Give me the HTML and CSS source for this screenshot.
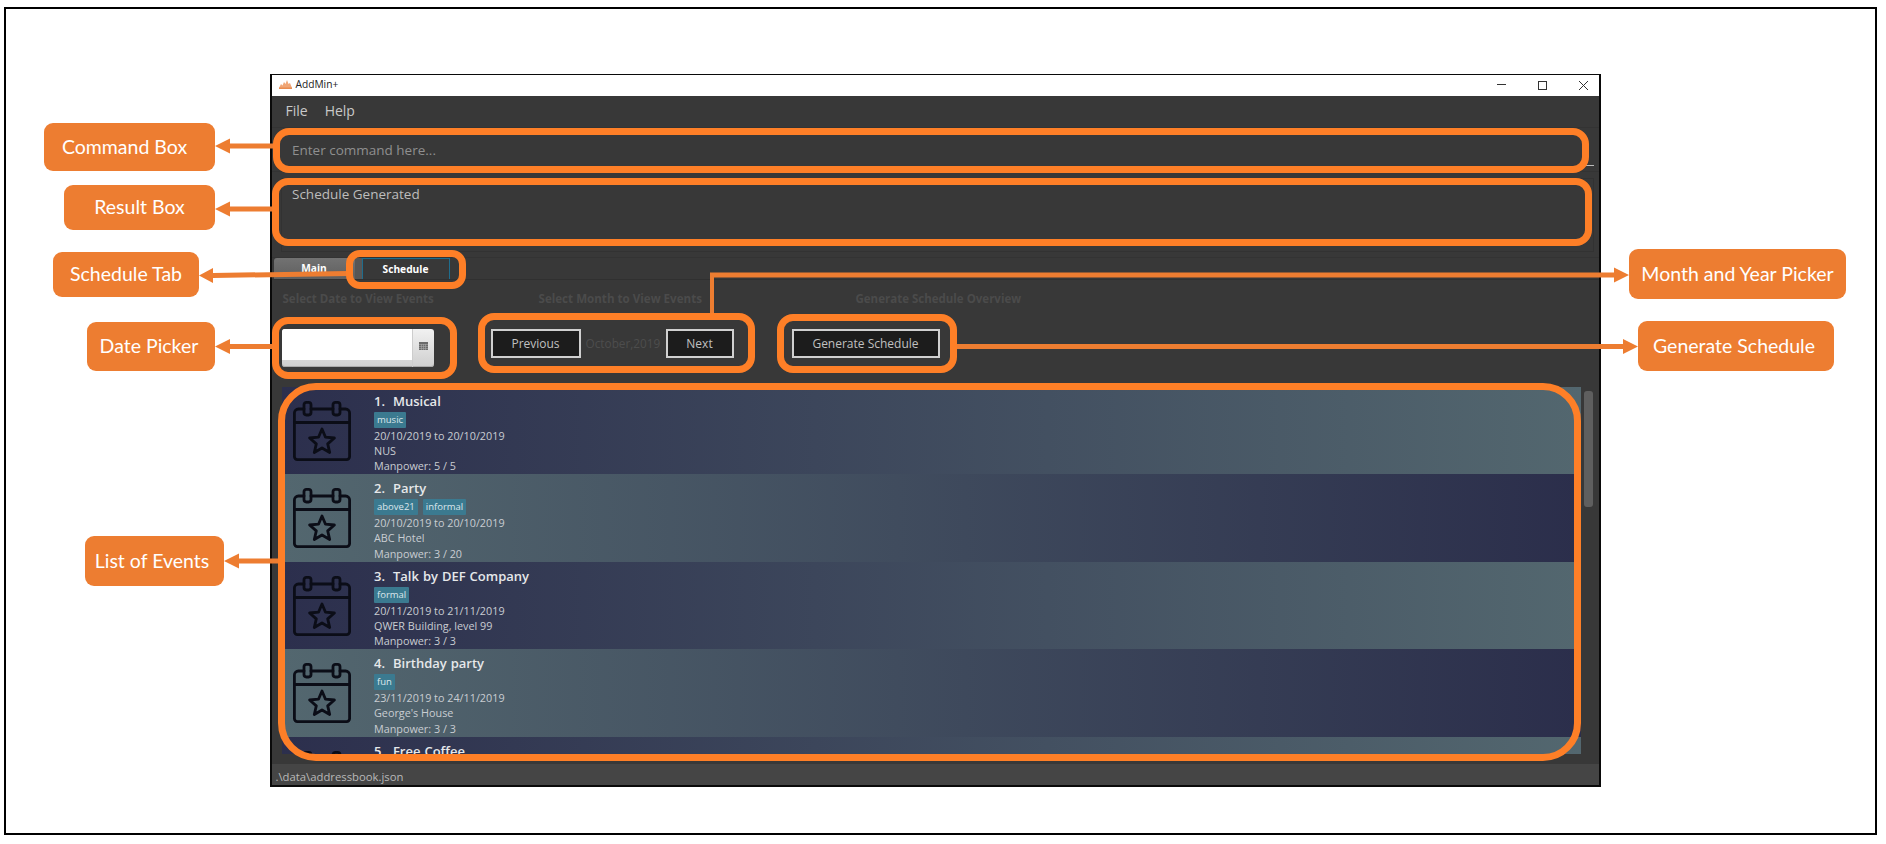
FILE: index.html
```html
<!DOCTYPE html>
<html lang="en">
<head>
<meta charset="utf-8">
<title>AddMin+ annotated</title>
<link rel="stylesheet" href="styles.css">
</head>
<body>
<svg class="defs" width="0" height="0" aria-hidden="true">
  <symbol id="cal" viewBox="0 0 58 60">
    <g fill="none" stroke="currentColor" stroke-width="2.8" stroke-linejoin="round" stroke-linecap="round">
      <path d="M11 8H5.4a4 4 0 0 0-4 4v43.6a3 3 0 0 0 3 3h49.2a3 3 0 0 0 3-3V12a4 4 0 0 0-4-4H47M18 8h22"/>
      <path d="M1.4 21.5h55.2"/>
      <rect x="11" y="1.4" width="7" height="12.6" rx="2.4"/>
      <rect x="40" y="1.4" width="7" height="12.6" rx="2.4"/>
      <path d="M29 28l3.5 8.2 8.9.8-6.7 5.9 2 8.6-7.7-4.5-7.7 4.5 2-8.6-6.7-5.9 8.9-.8z"/>
    </g>
  </symbol>
</svg>

<main class="slide">
  <section class="window">
    <header class="titlebar">
      <svg class="logo" viewBox="0 0 13 10" width="13" height="10"><path d="M0 9l2-4 1.500 1.500L5 3l1.500 2L8 1l1.500 4L11 4l2 5z" fill="#f0a676"/><path d="M0 8.500h13V10H0z" fill="#e98b4f"/></svg>
      <span class="app-name">AddMin+</span>
      <div class="win-controls">
        <svg class="wc wc-min" viewBox="0 0 9 9" width="9" height="9"><path d="M0 3.500h9" stroke="#333" fill="none"/></svg>
        <svg class="wc wc-max" viewBox="0 0 9 9" width="9" height="9"><rect x=".5" y=".5" width="8" height="8" fill="none" stroke="#333"/></svg>
        <svg class="wc wc-close" viewBox="0 0 9 9" width="9" height="9"><path d="M0 0l9 9M9 0l-9 9" stroke="#333" fill="none"/></svg>
      </div>
    </header>

    <nav class="menubar">
      <span class="menu-item">File</span>
      <span class="menu-item">Help</span>
    </nav>

    <div class="command">
      <span class="command-text">Enter command here...</span>
      <span class="command-mark"></span>
    </div>

    <div class="result">
      <div class="result-box">Schedule Generated</div>
    </div>

    <div class="tabs">
      <div class="tab tab-main">Main</div>
      <div class="tab-gap"></div>
      <div class="tab tab-schedule">Schedule</div>
    </div>

    <div class="panel">
      <div class="toolbar">
        <div class="group group-date">
          <div class="group-label">Select Date to View Events</div>
          <div class="datepicker">
            <div class="date-input"></div>
            <div class="date-button">
              <svg viewBox="0 0 9 8" width="9" height="8"><rect width="9" height="8" fill="#6a6a6a"/><path d="M0 2.500h9M0 4.500h9M0 6.500h9M2.500 2v6M4.500 2v6M6.500 2v6" stroke="#a8a8a8" stroke-width=".6"/></svg>
            </div>
          </div>
        </div>
        <div class="group group-month">
          <div class="group-label label-month">Select Month to View Events</div>
          <div class="month-row">
            <button class="btn btn-prev" type="button">Previous</button>
            <span class="month-name">October,2019</span>
            <button class="btn btn-next" type="button">Next</button>
          </div>
        </div>
        <div class="group group-gen">
          <div class="group-label label-gen">Generate Schedule Overview</div>
          <button class="btn btn-gen" type="button">Generate Schedule</button>
        </div>
      </div>

      <div class="list-wrap">
        <div class="list">
          <article class="row row-odd">
            <svg class="row-icon"><use href="#cal"/></svg>
            <div class="row-body">
              <div class="row-title">1.&nbsp; Musical</div>
              <div class="tags"><span class="tag">music</span></div>
              <div class="row-line">20/10/2019 to 20/10/2019</div>
              <div class="row-line">NUS</div>
              <div class="row-line">Manpower: 5 / 5</div>
            </div>
          </article>
          <article class="row row-even">
            <svg class="row-icon"><use href="#cal"/></svg>
            <div class="row-body">
              <div class="row-title">2.&nbsp; Party</div>
              <div class="tags"><span class="tag">above21</span><span class="tag">informal</span></div>
              <div class="row-line">20/10/2019 to 20/10/2019</div>
              <div class="row-line">ABC Hotel</div>
              <div class="row-line">Manpower: 3 / 20</div>
            </div>
          </article>
          <article class="row row-odd">
            <svg class="row-icon"><use href="#cal"/></svg>
            <div class="row-body">
              <div class="row-title">3.&nbsp; Talk by DEF Company</div>
              <div class="tags"><span class="tag">formal</span></div>
              <div class="row-line">20/11/2019 to 21/11/2019</div>
              <div class="row-line">QWER Building, level 99</div>
              <div class="row-line">Manpower: 3 / 3</div>
            </div>
          </article>
          <article class="row row-even">
            <svg class="row-icon"><use href="#cal"/></svg>
            <div class="row-body">
              <div class="row-title">4.&nbsp; Birthday party</div>
              <div class="tags"><span class="tag">fun</span></div>
              <div class="row-line">23/11/2019 to 24/11/2019</div>
              <div class="row-line">George's House</div>
              <div class="row-line">Manpower: 3 / 3</div>
            </div>
          </article>
          <article class="row row-odd">
            <svg class="row-icon"><use href="#cal"/></svg>
            <div class="row-body">
              <div class="row-title">5.&nbsp; Free Coffee</div>
            </div>
          </article>
        </div>
        <div class="scrollbar"><div class="scroll-thumb"></div></div>
      </div>
    </div>

    <footer class="status">.\data\addressbook.json</footer>
  </section>
</main>

<svg class="connectors" viewBox="0 0 1886 844" width="1886" height="844" aria-hidden="true">
  <path class="arrow" d="M215 146l15-7.500v5h44v5h-44v5z"/>
  <path class="arrow" d="M215 209l15-7.500v5h44v5h-44v5z"/>
  <path class="arrow" d="M199 275.500l14-7.500v5l135-2v5l-135 2v5z"/>
  <path class="arrow" d="M215 346.500l15-7.500v5h44v5h-44v5z"/>
  <path class="arrow" d="M224 561l15-7.500v5h41v5h-41v5z"/>
  <path class="arrow" d="M710 314v-41.500h904v-5l15 7.500-15 7.500v-5H714V314z"/>
  <path class="arrow" d="M955 344h668v-5l15 7.500-15 7.500v-5H955z"/>
</svg>

<div class="ring ring-command"></div>
<div class="ring ring-result"></div>
<div class="ring ring-tab"></div>
<div class="ring ring-date"></div>
<div class="ring ring-month"></div>
<div class="ring ring-gen"></div>
<div class="ring ring-list"></div>

<div class="callout call-command">Command Box</div>
<div class="callout call-result">Result Box</div>
<div class="callout call-tab">Schedule Tab</div>
<div class="callout call-date">Date Picker</div>
<div class="callout call-list">List of Events</div>
<div class="callout call-month">Month and Year Picker</div>
<div class="callout call-gen">Generate Schedule</div>
</body>
</html>
```
FILE: styles.css
```css
* { box-sizing: border-box; }
html, body { margin: 0; padding: 0; }
body {
  position: relative;
  width: 1886px;
  height: 844px;
  overflow: hidden;
  background: #fff;
  font-family: "Open Sans", "Noto Sans", sans-serif;
  padding: 7px 0 0 4px;
}
.defs { position: absolute; }

.slide {
  width: 1873px;
  height: 828px;
  border: 2.5px solid #000;
  padding: 64.5px 0 0 263.5px;
}

.window {
  width: 1331px;
  height: 713px;
  border: 2px solid #0a0a0a;
  border-top-width: 1px;
  background: #383838;
  display: flex;
  flex-direction: column;
}

/* title bar */
.titlebar {
  flex: 0 0 21px;
  background: #fff;
  display: flex;
  align-items: center;
  padding-left: 7px;
}
.logo { margin-top: -3px; }
.app-name { margin-left: 4px; margin-top: -2px; font-size: 10.200px; color: #222; }
.win-controls { margin-left: auto; display: flex; align-items: center; padding-right: 11px; }
.wc-max { margin-left: 32px; }
.wc-close { margin-left: 32px; }

/* menu */
.menubar {
  flex: 0 0 31px;
  display: flex;
  align-items: center;
  padding: 0 0 1px 14px;
  gap: 17px;
  font-size: 14px;
  color: #c9c9c9;
}

/* command */
.command {
  flex: 0 0 45px;
  position: relative;
  display: flex;
  align-items: center;
  padding: 1px 0 0 20.500px;
  border-top: 1px solid #333;
  border-bottom: 1px solid #333;
  font-size: 13.500px;
  color: #8f8f8f;
}
.command-mark {
  position: absolute;
  right: 5px;
  bottom: 5px;
  width: 9px;
  height: 1px;
  background: #bdbdbd;
}

/* result */
.result {
  flex: 0 0 86px;
  padding: 6px 5px 5px 9px;
  border-bottom: 1px solid #333;
}
.result-box {
  height: 100%;
  border: 1px solid #323232;
  padding: 5px 10.500px;
  font-size: 13.500px;
  line-height: 20px;
  color: #bdbdbd;
}

/* tabs */
.tabs {
  flex: 0 0 22px;
  display: flex;
  align-items: stretch;
  padding-left: 2px;
  border-bottom: 1px solid #303030;
}
.tab {
  display: flex;
  align-items: center;
  justify-content: center;
  font-size: 10.200px;
  font-weight: 700;
  color: #fff;
}
.tab-main {
  width: 81px;
  background: linear-gradient(#727272, #5f5f5f);
  border-radius: 3px 3px 0 0;
}
.tab-gap { width: 7px; background: #565656; }
.tab-schedule {
  width: 88px;
  background: #383838;
  border: 1px solid #1f6d8d;
  border-bottom: 0;
}

/* panel */
.panel {
  flex: 1 1 0;
  min-height: 0;
  display: flex;
  flex-direction: column;
  padding: 11px 0 10px 10px;
}
.toolbar { flex: 0 0 96px; display: flex; align-items: flex-start; }
.group-label {
  height: 16px;
  margin-bottom: 22px;
  font-size: 11.500px;
  line-height: 16px;
  font-weight: 700;
  color: #4b4b4b;
  white-space: nowrap;
}
.group-date { width: 209px; }
.group-date .group-label { padding-left: 1px; }
.group-month { width: 301px; }
.label-month { padding-left: 48px; font-size: 11.600px; }
.label-gen { padding-left: 64px; }

.datepicker {
  width: 152px;
  height: 38px;
  display: flex;
  border-radius: 3px;
  overflow: hidden;
  background: linear-gradient(#f1f1f1, #cfcfcf);
  box-shadow: inset 0 -1px 0 #aaa;
}
.date-input {
  width: 130px;
  height: 31px;
  background: #fff;
}
.date-button {
  flex: 1;
  display: flex;
  align-items: center;
  justify-content: center;
  padding-bottom: 3px;
  border-left: 1px solid #cdcdcd;
}

.month-row { display: flex; align-items: flex-start; }
.btn {
  height: 29px;
  padding: 0;
  border: 2px solid #d0d0d0;
  background: #1c1c1c;
  color: #c0c0c0;
  font: 400 12px "Open Sans", "Noto Sans", sans-serif;
}
.btn-prev { width: 90px; }
.btn-next { width: 68px; }
.btn-gen { width: 148px; }
.month-name {
  width: 85px;
  padding-left: 5px;
  padding-top: 6px;
  font-size: 11.800px;
  line-height: 16px;
  color: #4d4d4d;
  white-space: nowrap;
}

/* list */
.list-wrap { flex: 1 1 0; min-height: 0; display: flex; }
.list {
  width: 1299px;
  height: 367px;
  overflow: hidden;
  background: #52676f;
}
.row {
  height: 87.500px;
  display: flex;
  overflow: hidden;
  color: #c9cdd2;
}
.row-odd { background: linear-gradient(90deg, #2c2f4d, #53676f); }
.row-even { background: linear-gradient(90deg, #53676f, #2b2e4b); }
.row-icon {
  flex: 0 0 58px;
  width: 58px;
  height: 60px;
  margin: 14px 0 0 11px;
  color: #0b0d17;
}
.row-body { margin-left: 23.500px; padding-top: 5px; }
.row-title {
  font-size: 13px;
  line-height: 18px;
  font-weight: 600;
  color: #e6e8ea;
  white-space: pre;
  word-spacing: .6px;
}
.tags { display: flex; gap: 5px; height: 16px; margin-top: 2px; }
.tag {
  height: 16px;
  padding: 0 3px;
  background: #3b7a90;
  border-radius: 1px;
  font-size: 9.500px;
  line-height: 15px;
  color: #dbe7ec;
}
.row-line { font-size: 10.800px; line-height: 15.300px; white-space: nowrap; }

.scrollbar { flex: 1; padding: 4px 0 0 3px; }
.scroll-thumb { width: 9px; height: 116px; border-radius: 3px; background: #5f5f5f; }

/* status */
.status {
  flex: 0 0 21px;
  background: #454545;
  padding-left: 4px;
  font-size: 11.300px;
  line-height: 26px;
  overflow: hidden;
  color: #b9b9b9;
}

/* annotations */
.connectors { position: absolute; left: 0; top: 0; }
.arrow { fill: #ed7d31; }

.ring {
  position: absolute;
  border: 7px solid #fe7f27;
  border-radius: 16px;
}
.ring-command { left: 273px; top: 128px; width: 1316px; height: 45px; }
.ring-result { left: 272px; top: 178px; width: 1320px; height: 68px; }
.ring-tab { left: 346px; top: 250px; width: 120px; height: 39px; border-radius: 14px; }
.ring-date { left: 272px; top: 317px; width: 185px; height: 62px; }
.ring-month { left: 478px; top: 313px; width: 277px; height: 60px; }
.ring-gen { left: 777px; top: 314px; width: 180px; height: 59px; }
.ring-list { left: 278px; top: 383px; width: 1303px; height: 378px; border-radius: 38px; }

.callout {
  position: absolute;
  display: flex;
  align-items: center;
  justify-content: center;
  border-radius: 9px;
  background: #ed7d31;
  font-family: Lato, "Noto Sans", sans-serif;
  font-size: 19.500px;
  color: #fff;
  white-space: nowrap;
  padding-bottom: 2px;
}
.call-command { left: 44px; top: 123px; width: 171px; height: 48px; padding-right: 10px; }
.call-result { left: 64px; top: 185px; width: 151px; height: 45px; }
.call-tab { left: 53px; top: 252px; width: 146px; height: 45px; }
.call-date { left: 87px; top: 322px; width: 128px; height: 49px; padding-right: 4px; }
.call-list { left: 85px; top: 536px; width: 139px; height: 50px; padding-right: 5px; }
.call-month { left: 1629px; top: 249px; width: 217px; height: 50px; }
.call-gen { left: 1638px; top: 321px; width: 196px; height: 50px; padding-right: 4px; }
```
